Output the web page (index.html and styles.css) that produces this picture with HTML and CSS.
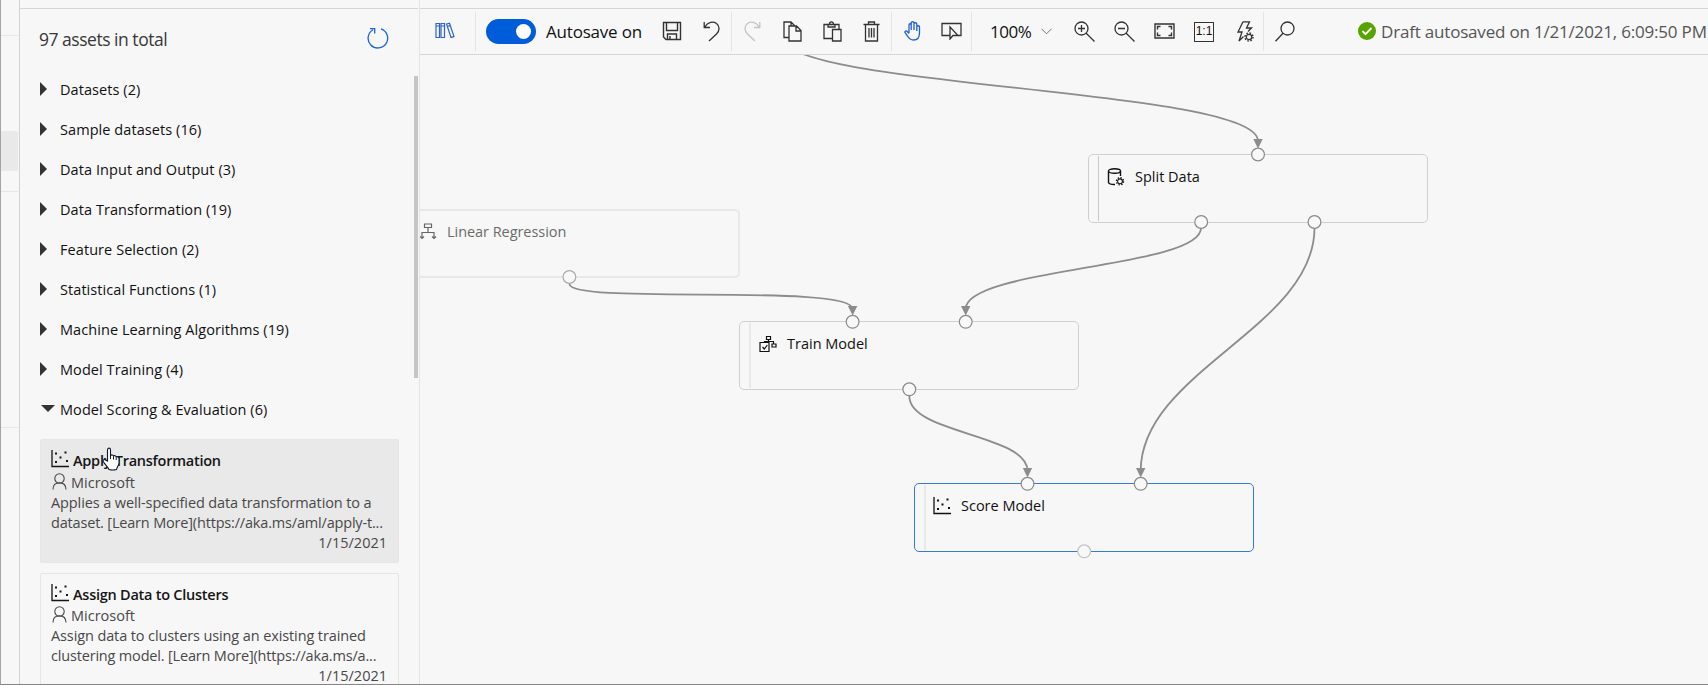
FILE: index.html
```html
<!DOCTYPE html>
<html lang="en">
<head>
<meta charset="utf-8">
<title>Designer</title>
<link rel="stylesheet" href="styles.css">
</head>
<body>
<svg class="defs" width="0" height="0">
  <symbol id="scatter" viewBox="0 0 18 18"><path d="M1 0V16.5H18" fill="none" stroke="currentColor" stroke-width="1.3"/><path d="M4 2.5h2v2H4zM13.500 1.500h2v2h-2zM8.500 6.500h2v2h-2zM4 11h2v2H4zM15 10h2v2h-2z" fill="currentColor"/></symbol>
  <symbol id="person" viewBox="0 0 15 17"><g fill="none" stroke="currentColor" stroke-width="1.1"><circle cx="7.500" cy="5.500" r="4.700"/><path d="M1 16.500C1 12.500 3.500 9.800 7.500 9.800S14 12.500 14 16.500"/></g></symbol>
  <symbol id="gear" viewBox="0 0 10 10"><circle cx="5" cy="5" r="2.700" fill="none" stroke="currentColor" stroke-width="1.200"/><circle cx="5" cy="5" r="4" fill="none" stroke="currentColor" stroke-width="1.500" stroke-dasharray="1.570 1.570"/></symbol>
</svg>
<div class="app">
  <nav class="rail"><i class="rail-a"></i><i class="rail-sel"></i><i class="rail-b"></i><i class="rail-c"></i></nav>
  <aside class="assets">
    <header class="assets-head"><span class="total">97 assets in total</span>
      <svg class="refresh" width="22" height="22" viewBox="0 0 22 22" fill="none" stroke="#1764dc" stroke-width="1.300"><path d="M14 1.900A9.800 9.800 0 1 1 6 2.700M3 1.700H7.700V6.500"/></svg>
    </header>
    <div class="scroll">
      <ul class="tree">
        <li><i class="tri"></i><span>Datasets (2)</span></li>
        <li><i class="tri"></i><span>Sample datasets (16)</span></li>
        <li><i class="tri"></i><span>Data Input and Output (3)</span></li>
        <li><i class="tri"></i><span>Data Transformation (19)</span></li>
        <li><i class="tri"></i><span>Feature Selection (2)</span></li>
        <li><i class="tri"></i><span>Statistical Functions (1)</span></li>
        <li><i class="tri"></i><span>Machine Learning Algorithms (19)</span></li>
        <li><i class="tri"></i><span>Model Training (4)</span></li>
        <li><i class="tri open"></i><span>Model Scoring &amp; Evaluation (6)</span></li>
      </ul>
      <article class="card hover">
        <h3><svg width="18" height="18"><use href="#scatter"/></svg><span>Apply Transformation</span></h3>
        <p class="by"><svg width="15" height="17"><use href="#person"/></svg><span>Microsoft</span></p>
        <p class="desc"><span class="d1">Applies a well-specified data transformation to a</span><br><span class="d2">dataset. [Learn More](https://aka.ms/aml/apply-t...</span></p>
        <p class="date">1/15/2021</p>
      </article>
      <article class="card second">
        <h3><svg width="18" height="18"><use href="#scatter"/></svg><span>Assign Data to Clusters</span></h3>
        <p class="by"><svg width="15" height="17"><use href="#person"/></svg><span>Microsoft</span></p>
        <p class="desc"><span class="d1">Assign data to clusters using an existing trained</span><br><span class="d2">clustering model. [Learn More](https://aka.ms/a...</span></p>
        <p class="date">1/15/2021</p>
      </article>
    </div>
    <i class="thumb"></i>
  </aside>
  <main class="main">
    <div class="toolbar">
      <div class="group g1"><svg width="20" height="18" viewBox="0 0 20 18" fill="none" stroke="#2f62cf" stroke-width="1.200"><path d="M1 1.500h3.500v14H1zM6 1.500h3.500v14H6zM1 4h3.500M6 4h3.500M11.500 2l3-.8L19 14.500l-3 .9zM12.200 4.500l3-.8"/></svg></div>
      <div class="group g2"><span class="toggle"><i></i></span><span class="auto">Autosave on</span>
        <svg class="save" width="20" height="20" viewBox="0 0 20 20" fill="none" stroke="#333" stroke-width="1.400"><path d="M1.500 1.500h17v17H4l-2.500-2.500zM4.500 1.500v8h11v-8M5.500 18.500v-5.500h9v5.500M8 15v3.500"/></svg>
        <svg class="undo" width="18" height="21" viewBox="0 0 18 21" fill="none" stroke="#333" stroke-width="1.300"><path d="M1.200 1V6.500H7M1.500 6.300C5 .8 10 0 13.500 2.500C17 5.200 16.800 9.500 13.500 13L6 20"/></svg>
      </div>
      <div class="group g3">
        <svg class="i-redo" width="18" height="21" viewBox="0 0 18 21" fill="none" stroke="#c4c4c8" stroke-width="1.300"><path d="M16.800 1V6.500H11M16.500 6.300C13 .8 8 0 4.500 2.500C1 5.200 1.200 9.500 4.500 13L12 20"/></svg>
        <svg class="i-copy" width="19" height="21" viewBox="0 0 19 21" fill="none" stroke="#333" stroke-width="1.300"><path d="M5.500 16.500H1V1h7l4 4M6 5h7.500l4.500 4.500V20H6zM13 5v5h5M8 1v4"/></svg>
        <svg class="i-paste" width="19" height="21" viewBox="0 0 19 21" fill="none" stroke="#333" stroke-width="1.300"><path d="M9 17.500H1V3.500h15V8M5 3.500v2.500h7V3.500h-1.500C10.500 0 6.500 0 6.500 3.500M9.500 8.500H18V20H9.500z"/></svg>
        <svg class="i-trash" width="17" height="21" viewBox="0 0 17 21" fill="none" stroke="#333" stroke-width="1.300"><path d="M.5 3.500h16M5.500 3.500v-2.500h6v2.500M2.500 3.500V20h12V3.500M6 7v9.500M8.500 7v9.500M11 7v9.500"/></svg>
      </div>
      <div class="group g4">
        <svg class="i-hand" width="18" height="20" viewBox="0 0 18 20" fill="none" stroke="#2060d8" stroke-width="1.300"><path d="M5 12V4C5 2.300 7.200 2.300 7.200 4V9V2C7.200 .3 10 .3 10 2V9V3C10 1.300 12.800 1.300 12.800 3V10V6C12.800 4.300 15.500 4.300 15.500 6V12C15.500 17 13 19 9.500 19C6 19 5 17.500 3.500 15L1 11.500C.5 10 2.500 9.500 3.300 10.500L5 12.500"/></svg>
        <svg class="i-select" width="21" height="18" viewBox="0 0 21 18" fill="none" stroke="#333" stroke-width="1.300"><path d="M8.500 13.500H1V1.500h19v12h-3M9 5v12l3-3.500h5z"/></svg>
      </div>
      <div class="group g5"><span class="pct">100%</span>
        <svg class="i-chev" width="11" height="7" viewBox="0 0 11 7" fill="none" stroke="#777" stroke-width="1"><path d="M.5 .8L5.500 5.800L10.500 .8"/></svg>
        <svg class="i-zin" width="21" height="21" viewBox="0 0 21 21" fill="none" stroke="#333" stroke-width="1.300"><circle cx="7.500" cy="7.500" r="6.500"/><path d="M12.200 12.200L20.500 20.500M7.500 4v7M4 7.500h7"/></svg>
        <svg class="i-zout" width="21" height="21" viewBox="0 0 21 21" fill="none" stroke="#333" stroke-width="1.300"><circle cx="7.500" cy="7.500" r="6.500"/><path d="M12.200 12.200L20.500 20.500M4 7.500h7"/></svg>
        <svg class="i-fit" width="21" height="16" viewBox="0 0 21 16" fill="none" stroke="#333" stroke-width="1.400"><path d="M1 1h19v14H1zM3.500 6.500v-3h3M14.500 3.500h3v3M17.500 9.500v3h-3M6.500 12.500h-3v-3"/></svg>
        <span class="one">1:1</span>
        <svg class="i-bolt" width="18" height="21" viewBox="0 0 18 21" fill="none" stroke="#333" stroke-width="1.300"><path d="M7 .8h6.500L10.500 7h5L12 10.500M7 .8L2 11h4L3 20L7.500 15.500"/><use href="#gear" x="8" y="11" width="10" height="10" color="#333"/></svg>
      </div>
      <div class="group g6"><svg width="20" height="21" viewBox="0 0 20 21" fill="none" stroke="#333" stroke-width="1.300"><circle cx="12.500" cy="7.500" r="6.500"/><path d="M8 12.200L.5 20.200"/></svg>
        <svg class="i-ok" width="18" height="18" viewBox="0 0 18 18"><circle cx="9" cy="9" r="9" fill="#57a300"/><path d="M4.500 9.200l3 3 6-6.200" fill="none" stroke="#fff" stroke-width="1.800"/></svg>
        <span class="draft">Draft autosaved on 1/21/2021, 6:09:50 PM</span>
      </div>
    </div>
    <div class="canvas">
      <section class="node linear"><svg width="18" height="18" viewBox="0 0 18 18" fill="none" stroke="#666" stroke-width="1.200"><path d="M5.500 1h7v3.500h-7zM9 4.500v5M3 15.500V9.500h12v6M1 13.500l2 2 2-2M13 13.500l2 2 2-2"/></svg><span>Linear Regression</span></section>
      <section class="node split"><svg width="18" height="18" viewBox="0 0 18 18" fill="none" stroke="#111" stroke-width="1.400"><ellipse cx="7.500" cy="3" rx="6" ry="2.200"/><path d="M1.500 3V14.500C2 16 4 16.600 8 16.500M13.500 3V8"/><use href="#gear" x="8.500" y="8.800" width="9" height="9"/></svg><span>Split Data</span></section>
      <section class="node train"><svg width="18" height="18" viewBox="0 0 18 18" fill="none" stroke="#111" stroke-width="1.200"><path d="M7.500 1.500h4v3h-4zM9.500 4.500v2M5.500 7.500V6.500h9V9M13 9h4v3h-4zM1 7.500h9v9H1zM3.500 12l1.800 2 3-4"/></svg><span>Train Model</span></section>
      <section class="node score"><svg width="18" height="18"><use href="#scatter"/></svg><span>Score Model</span></section>
      <svg class="edges" width="1288" height="629" viewBox="420 55 1288 629">
        <g fill="none" stroke="#8c8c8c" stroke-width="1.800">
          <path d="M782 37C782 88,1258 88,1258 141"/>
          <path d="M569.500 284C569.500 305,852.600 283,852.600 309"/>
          <path d="M1201 228C1201 268,965.700 268,965.700 309"/>
          <path d="M1314.500 228C1314.500 327,1140.700 372,1140.700 471"/>
          <path d="M909.300 396C909.300 434,1027.500 434,1027.500 471"/>
        </g>
        <g fill="#8c8c8c">
          <path d="M1253.300 139h9.400l-4.700 9.500z"/><path d="M847.900 306h9.400l-4.700 9.500z"/><path d="M961 306h9.400l-4.700 9.500z"/><path d="M1022.800 468h9.400l-4.700 9.500z"/><path d="M1136 468h9.400l-4.700 9.500z"/>
        </g>
        <g fill="#f8f8f8" stroke="#8a8a8a" stroke-width="1.200">
          <circle cx="1258" cy="154.500" r="6.400"/><circle cx="1201.200" cy="222" r="6.400"/><circle cx="1314.500" cy="222" r="6.400"/>
          <circle cx="852.600" cy="321.800" r="6.400"/><circle cx="965.700" cy="321.800" r="6.400"/><circle cx="909.300" cy="389.300" r="6.400"/>
          <circle cx="1027.500" cy="483.800" r="6.400"/><circle cx="1140.700" cy="483.800" r="6.400"/>
          <circle cx="569.400" cy="277" r="6.400" stroke="#aaa"/><circle cx="1084.200" cy="551.300" r="6.400" stroke="#c4c4c4"/>
        </g>
      </svg>
    </div>
  </main>
  <svg class="cursor" width="18" height="24" viewBox="0 0 18 24"><path d="M5.500 14V3C5.500 .5 8.500 .5 8.500 3V8.500C9.500 7.500 11.300 7.800 11.500 9C12.500 8.200 14 8.700 14.200 10C15.500 9.500 17 10.200 17 12V16C17 18 15 20 14.500 22.500C11.500 23.300 9 23 7 22.500C6 20 3 17.500 1.200 14.500C.5 12.800 2.500 12 3.500 13z" fill="#fff" stroke="#111827" stroke-width="1.100"/><path d="M8.500 8.500V12M11.500 9.500V12.500M14.200 10.500V13" stroke="#111827"/></svg>
</div>
</body>
</html>
```
FILE: styles.css
```css
* { box-sizing: border-box; }
body { margin: 0; background: #f7f7f7; font-family: "Open Sans", "Noto Sans", sans-serif; color: #111; }
h3, p, ul { margin: 0; padding: 0; }
svg { display: block; flex: none; }
.defs { position: absolute; }
.app { display: flex; width: 1708px; height: 685px; overflow: hidden; position: relative; border-left: 1px solid #a3a3a3; border-bottom: 1px solid #858585; }

.rail { width: 19px; border-right: 1px solid #d2d2d2; display: flex; flex-direction: column; padding-right: 1px; flex: none; }
.rail i { display: block; flex: none; }
.rail-a { height: 36px; border-bottom: 1px solid #e6e6e6; }
.rail-sel { height: 40px; margin-top: 95px; background: #e9e9e9; border-radius: 0 2px 2px 0; }
.rail-b { height: 21px; border-bottom: 1px solid #e6e6e6; }
.rail-c { height: 236px; border-bottom: 1px solid #e6e6e6; }

.assets { width: 400px; border-right: 1px solid #e4e4e4; flex: none; position: relative; display: flex; flex-direction: column; }
.assets-head { margin: 8px 1px 0 0; border-top: 1px solid #d6d6d6; height: 61px; display: flex; justify-content: space-between; align-items: flex-start; padding: 18px 29px 0 19px; flex: none; }
.total { font-size: 17.5px; line-height: 24px; color: #383838; letter-spacing: -.48px; white-space: nowrap; }
.scroll { flex: 1; overflow: hidden; padding-left: 20px; min-height: 0; }
.tree { list-style: none; height: 370px; }
.tree li { height: 40px; display: flex; align-items: center; font-size: 14.5px; white-space: nowrap; letter-spacing: .07px; font-weight: 500; }
.tri { width: 20px; flex: none; }
.tri::before { content: ""; display: block; width: 0; border-left: 7.5px solid #333; border-top: 7px solid transparent; border-bottom: 7px solid transparent; }
.tri.open::before { margin-left: .5px; border-top: 7px solid #333; border-left: 7px solid transparent; border-right: 7px solid transparent; border-bottom: 0; margin-top: -2px; }
.thumb { position: absolute; left: 394px; top: 76px; width: 4px; height: 302px; background: #c5c5c5; }

.card { width: 359px; height: 124px; border: 1px solid #e6e6e6; border-radius: 2px; padding: 10px 11px 0 10px; margin-bottom: 10px; font-size: 14.5px; line-height: 20px; color: #484848; white-space: nowrap; }
.card.hover { background: #e9e9e9; }
.card h3 { display: flex; height: 23px; color: #151515; font-size: 14.5px; font-weight: 600; gap: 4px; letter-spacing: -.25px; }
.card h3 span { line-height: 21px; }
.card .by { display: flex; gap: 4px; height: 20px; padding-left: 1px; }
.second .by { margin-top: -1px; }
.desc { height: 40px; }
.d1 { letter-spacing: -.11px; }
.d2 { letter-spacing: -.18px; }
.date { text-align: right; }

.main { flex: 1; min-width: 0; display: flex; flex-direction: column; padding-top: 8px; }
.toolbar { height: 47px; border-top: 1px solid #d6d6d6; border-bottom: 1px solid #d6d6d6; display: flex; align-items: center; white-space: nowrap; flex: none; }
.group { height: 39px; display: flex; align-items: center; border-right: 1px solid #e4e4e4; flex: none; }
.group > svg { margin-top: -1px; }
.g1 { width: 56px; padding-left: 15px; }
.g2 { width: 256px; padding-left: 10px; }
.toggle { width: 50px; height: 25px; border-radius: 13px; background: #015cda; display: flex; justify-content: flex-end; align-items: center; padding-right: 5px; flex: none; }
.toggle i { width: 15px; height: 15px; border-radius: 50%; background: #fff; }
.auto { width: 126px; padding-left: 10px; font-size: 17px; color: #111; letter-spacing: -.2px; flex: none; }
.undo { margin-left: 21px; }
.g3 { width: 160px; padding-left: 11px; }
.i-copy { margin-left: 22px; } .i-paste { margin-left: 21px; } .i-trash { margin-left: 21px; }
.g4 { width: 80px; padding-left: 12px; }
.i-select { margin-left: 19px; }
.g5 { width: 292px; padding-left: 18px; }
.pct { width: 51px; font-size: 17px; letter-spacing: -.5px; }
.i-zin { margin-left: 22px; } .i-zout { margin-left: 19px; } .i-fit { margin-left: 19px; }
.one { width: 20px; height: 20px; margin-left: 19px; border: 1.5px solid #333; font: 12px/17px "Liberation Sans", sans-serif; text-align: center; flex: none; }
.i-bolt { margin-left: 22px; }
.g6 { border: 0; padding-left: 11px; }
.i-ok { margin-left: 63px; }
.draft { margin-left: 5px; font-size: 17px; color: #555; letter-spacing: -.19px; }

.canvas { position: relative; flex: 1; overflow: hidden; }
.node { position: absolute; width: 340px; height: 69px; border: 1px solid #d0d0d0; border-radius: 5px; display: flex; padding: 13px 0 0 18px; font-size: 14.5px; line-height: 18px; gap: 10px; font-weight: 500; color: #111; white-space: nowrap; }
.node::before { content: ""; position: absolute; left: 9px; top: 1px; bottom: 1px; width: 1px; background: #c8c8c8; }
.linear { left: -20px; top: 154px; border: 2px solid #e8e8e8; color: #6b6b6b; padding: 12px 0 0 17px; letter-spacing: -.05px; }
.split { left: 668px; top: 99px; }
.train { left: 319px; top: 266px; padding-left: 19px; }
.score { left: 494px; top: 428px; border-color: #3479dc; }
.train::before, .score::before { width: 2px; background: #e8e8e8; }
.edges { position: absolute; left: 0; top: 0; }
.cursor { position: absolute; left: 101px; top: 447px; }
```
